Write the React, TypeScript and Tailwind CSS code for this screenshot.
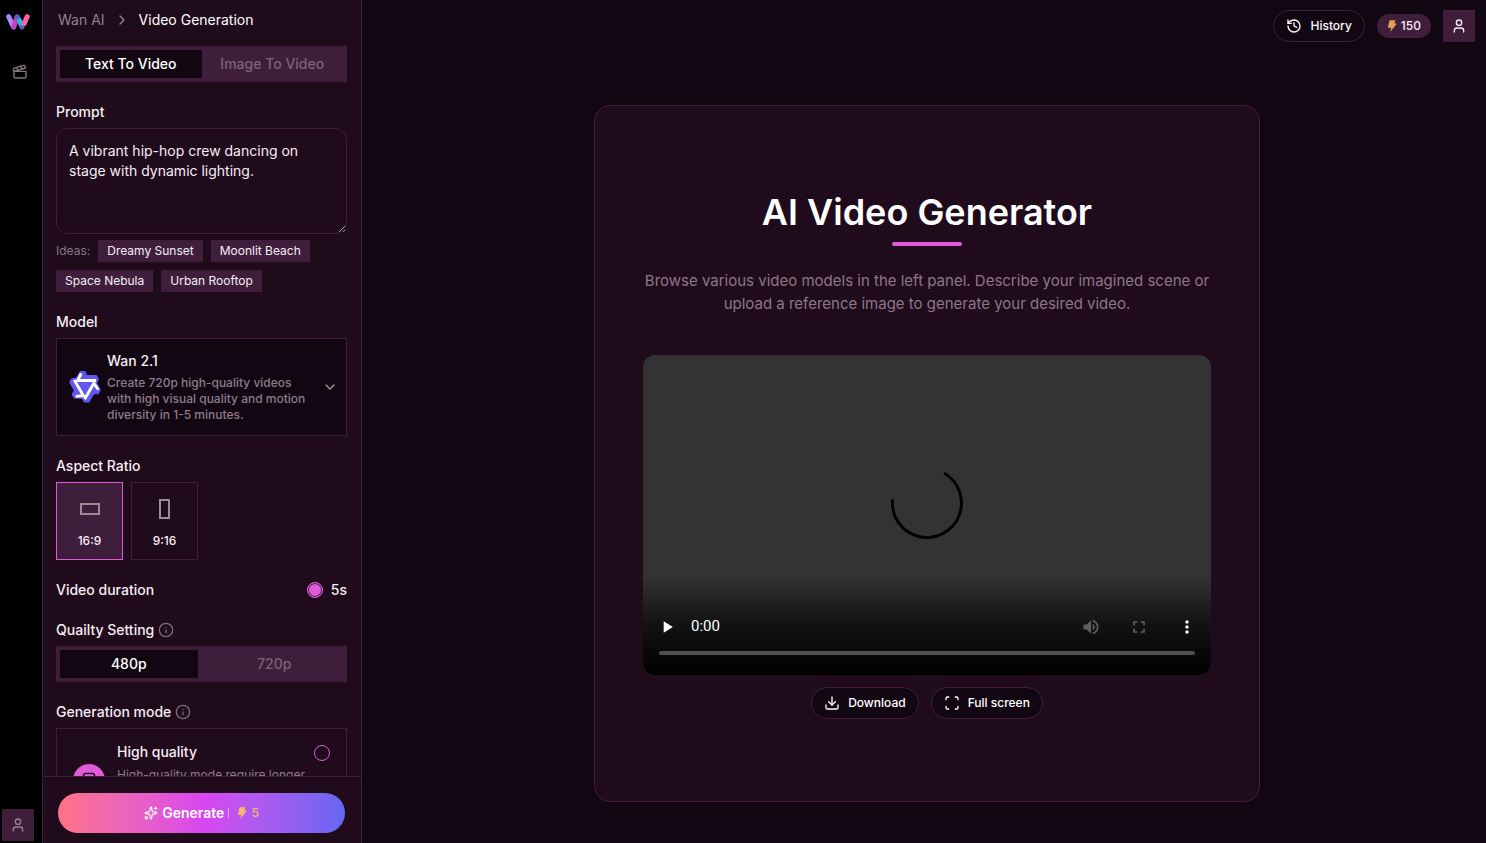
import { useState, type ReactNode } from "react";
import {
  ChevronDown,
  ChevronRight,
  Clapperboard,
  Download,
  History,
  Info,
  Scan,
  Sparkles,
  User,
} from "lucide-react";
import { MdFullscreen, MdMoreVert, MdPlayArrow, MdVolumeUp } from "react-icons/md";

const IDEAS = ["Dreamy Sunset", "Moonlit Beach", "Space Nebula", "Urban Rooftop"];

function WanLogo() {
  return (
    <svg viewBox="0 0 24 16" className="h-4 w-6" fill="none" strokeLinecap="round" strokeWidth="5">
      <path d="M2.7 2.7 7.5 13" stroke="#a78bfa" />
      <path d="M11 3 7.7 13" stroke="#c63fc0" />
      <path d="M11.4 2.9 16 13" stroke="#5b5fc7" />
      <path d="M13.4 6.8 14.6 9" stroke="#2fb8dc" />
      <path d="M21.2 2.7 18.2 9.500" stroke="#ff62b0" />
    </svg>
  );
}

function ModelLogo() {
  const arms = ["rotate(0 16 16)", "rotate(120 16 16)", "rotate(240 16 16)"];
  return (
    <svg viewBox="-0.5 0 33 33" className="size-8 shrink-0" fill="none">
      <path
        d="M11 0h5l2.300 4H28l2.500 4.500-2 4 3.900 7.200-2.500 4.300h-4.700l-4.800 8.400h-5.200l-2.400-3.700-8.200-.4L2.100 24l2.400-4-4.900-8.400 2.700-4.400 4.400-.3z"
        fill="#5f57ee"
      />
      {arms.map((t) => (
        <path key={t} d="M12 2.500 8.500 9.800h19" transform={t} stroke="#fff" strokeWidth="3" />
      ))}
    </svg>
  );
}

function Bolt({ className }: { className: string }) {
  return (
    <svg viewBox="0 0 12 14" className={className} fill="currentColor">
      <path d="M3 0h7L9 4h3L4 14l1-5H1z" />
    </svg>
  );
}

function Field({ label, info, children }: { label: string; info?: boolean; children: ReactNode }) {
  return (
    <section className="flex flex-col gap-1.5">
      <div className="flex items-center gap-1">
        <h2 className="text-sm font-medium">{label}</h2>
        {info && <Info className="size-4 text-[#7d6a79]" />}
      </div>
      {children}
    </section>
  );
}

function Segmented({
  options,
  value,
  onChange,
  className = "",
}: {
  options: string[];
  value: string;
  onChange: (v: string) => void;
  className?: string;
}) {
  return (
    <div className={`flex h-9 bg-[#3f1e3c] p-1 ${className}`}>
      {options.map((o) => (
        <button
          key={o}
          type="button"
          onClick={() => onChange(o)}
          className={`flex-1 text-sm font-medium ${
            o === value ? "bg-[#130613] text-white" : "text-[#7d6379]"
          }`}
        >
          {o}
        </button>
      ))}
    </div>
  );
}

function VideoPlayer() {
  return (
    <div className="flex aspect-[568/320] w-full flex-col overflow-hidden rounded-xl bg-[#333]">
      <div className="flex grow flex-col items-center justify-end pb-9">
        <svg viewBox="0 0 72 72" className="size-[72px]" fill="none">
          <path d="M53 6A34.500 34.500 0 1 1 1.600 32.500" stroke="#000" strokeWidth="3" />
        </svg>
      </div>
      <div className="flex h-[100px] flex-col justify-end bg-linear-to-b from-transparent via-black/65 to-black pb-5">
        <div className="flex h-12 items-center text-white">
          <button type="button" aria-label="Play" className="flex w-12 justify-center">
            <MdPlayArrow className="size-5" />
          </button>
          <span className="grow font-[Roboto,sans-serif] text-[15px]">0:00</span>
          <button type="button" aria-label="Mute" className="flex w-12 justify-center text-[#5f5f5f]">
            <MdVolumeUp className="size-5" />
          </button>
          <button type="button" aria-label="Full screen" className="flex w-12 justify-center text-[#5f5f5f]">
            <MdFullscreen className="size-5" />
          </button>
          <button type="button" aria-label="More" className="flex w-12 justify-center">
            <MdMoreVert className="size-5" />
          </button>
        </div>
        <div className="mx-4 h-1 rounded-full bg-[#4f4f4f]" />
      </div>
    </div>
  );
}

export default function App() {
  const [mode, setMode] = useState("Text To Video");
  const [quality, setQuality] = useState("480p");
  const [ratio, setRatio] = useState("16:9");
  const [prompt, setPrompt] = useState(
    "A vibrant hip-hop crew dancing on stage with dynamic lighting."
  );

  return (
    <div className="flex h-screen bg-[#130613] font-[Inter,sans-serif] text-[#f5eef4]">
      {/* Icon rail */}
      <nav className="flex w-[42px] shrink-0 flex-col items-center bg-black pt-3.5 pr-1.5 pb-0.5">
        <a href="#" aria-label="Home">
          <WanLogo />
        </a>
        <a href="#" aria-label="Videos" className="mt-[34px] ml-1 text-[#84767f]">
          <Clapperboard className="size-4" />
        </a>
        <button
          type="button"
          aria-label="Account"
          className="mt-auto flex size-8 items-center justify-center bg-[#3f1e3c] text-[#94808f]"
        >
          <User className="size-4" />
        </button>
      </nav>

      {/* Settings panel */}
      <aside className="flex w-80 shrink-0 flex-col border-x border-[#411e3c] bg-[#200b1c]">
        <div className="flex min-h-0 grow flex-col gap-5 overflow-hidden pt-2.5 pr-3.5 pl-[13px]">
          <div className="flex flex-col gap-4">
            <div className="flex items-center gap-[9px] px-0.5 text-sm">
              <a href="#" className="text-[#93818f]">
                Wan AI
              </a>
              <ChevronRight className="size-4 text-[#93818f]" />
              <span className="text-white">Video Generation</span>
            </div>
            <Segmented options={["Text To Video", "Image To Video"]} value={mode} onChange={setMode} />
          </div>

          <Field label="Prompt">
            <textarea
              aria-label="Prompt"
              value={prompt}
              onChange={(e) => setPrompt(e.target.value)}
              className="block h-[106px] w-full rounded-xl border border-[#411e3c] bg-transparent px-3 py-3 text-sm outline-none"
            />
            <div className="flex flex-wrap items-center gap-2">
              <span className="text-xs text-[#8a7686]">Ideas:</span>
              {IDEAS.map((idea) => (
                <button
                  key={idea}
                  type="button"
                  onClick={() => setPrompt(idea)}
                  className="h-[22px] bg-[#3f1e3c] px-[9px] text-xs"
                >
                  {idea}
                </button>
              ))}
            </div>
          </Field>

          <Field label="Model">
            <button
              type="button"
              className="flex items-center gap-1.5 border border-[#411e3c] bg-[#130613] py-3 pr-2 pl-3 text-left"
            >
              <ModelLogo />
              <span className="grow">
                <span className="mb-1 block text-sm font-medium">Wan 2.1</span>
                <span className="block text-xs leading-4 font-medium text-[#8d7c89]">
                  Create 720p high-quality videos with high visual quality and motion diversity in 1-5
                  minutes.
                </span>
              </span>
              <ChevronDown className="size-4 shrink-0 text-[#a8929f]" />
            </button>
          </Field>

          <Field label="Aspect Ratio">
            <div className="flex gap-2">
              {["16:9", "9:16"].map((r) => (
                <button
                  key={r}
                  type="button"
                  onClick={() => setRatio(r)}
                  className={`flex h-[78px] w-[67px] flex-col items-center gap-3 border pt-3.5 text-xs font-medium ${
                    r === ratio ? "border-[#e05ad9] bg-[#3f1e3c]" : "border-[#411e3c]"
                  }`}
                >
                  <span className="flex size-6 items-center justify-center">
                    <span
                      className={`border-2 border-[#9c8a98] ${
                        r === "16:9" ? "h-3 w-5" : "h-5 w-[11px]"
                      }`}
                    />
                  </span>
                  {r}
                </button>
              ))}
            </div>
          </Field>

          <div className="flex items-center justify-between text-sm font-medium">
            <h2>Video duration</h2>
            <label className="flex items-center gap-2">
              <input
                type="radio"
                name="duration"
                defaultChecked
                className="size-4 appearance-none rounded-full border border-[#e05ad9] bg-[#e05ad9] inset-ring inset-ring-[#3f1e3c]"
              />
              5s
            </label>
          </div>

          <Field label="Quailty Setting" info>
            <Segmented options={["480p", "720p"]} value={quality} onChange={setQuality} className="gap-2" />
          </Field>

          <Field label="Generation mode" info>
            <label className="flex h-[104px] items-start border border-[#411e3c] px-4 py-[13px]">
              <span className="mr-3 flex size-8 shrink-0 items-center justify-center self-center rounded-full bg-[#e05ad9]">
                <svg viewBox="0 0 16 16" className="size-4" fill="none" stroke="#200b1c" strokeWidth="1.500">
                  <rect x="2.500" y="1.500" width="11" height="13" rx="2" />
                  <path d="M5.500 5h5M5.500 8h5" />
                </svg>
              </span>
              <span className="grow">
                <span className="mb-[5px] block text-sm font-medium">High quality</span>
                <span className="block text-xs leading-4 text-[#8d7c89]">
                  High-quality mode require longer
                </span>
              </span>
              <input
                type="radio"
                name="generation-mode"
                className="mt-[3px] size-4 shrink-0 appearance-none rounded-full border border-[#e05ad9]"
              />
            </label>
          </Field>
        </div>

        <div className="border-t border-[#411e3c] pt-4 pr-4 pb-2.5 pl-[15px]">
          <button
            type="button"
            className="flex h-10 w-full items-center justify-center gap-1 rounded-full bg-linear-to-r from-[#ff7285] via-[#d946ef] to-[#6366f1] text-sm font-semibold text-white"
          >
            <Sparkles className="size-3.5" />
            Generate
            <span className="h-2.5 w-px bg-white/50" />
            <span className="ml-1 flex items-center gap-1 text-xs font-medium text-[#f5b96b]">
              <Bolt className="h-3 w-2.5" />5
            </span>
          </button>
        </div>
      </aside>

      {/* Workspace */}
      <main className="flex min-w-0 grow flex-col">
        <header className="flex items-center justify-end gap-3 pt-2.5 pr-[11px]">
          <button
            type="button"
            className="flex h-8 items-center gap-2 rounded-full border border-[#411e3c] px-3 text-xs font-medium text-white"
          >
            <History className="size-4" />
            History
          </button>
          <span className="flex h-6 items-center gap-1 rounded-full bg-[#3f1e3c] px-2.5 text-xs font-medium">
            <Bolt className="h-3 w-2.5 text-[#e0a34e]" />
            150
          </span>
          <button type="button" aria-label="Account" className="flex size-8 items-center justify-center bg-[#3f1e3c]">
            <User className="size-4" />
          </button>
        </header>

        <div className="flex grow justify-center pt-[63px] pb-[41px] pl-1.5">
          <div className="flex w-full max-w-[666px] flex-col items-center justify-center rounded-2xl border border-[#411e3c] bg-[#200b1c] px-12 pt-[3px]">
            <h1 className="text-4xl font-semibold text-white">AI Video Generator</h1>
            <div className="mt-2.5 h-1 w-[70px] rounded-full bg-[#e05ad9]" />
            <p className="mt-[23px] mb-10 text-center text-[15px] leading-[23px] text-[#8d7789]">
              Browse various video models in the left panel. Describe your imagined scene or upload a
              reference image to generate your desired video.
            </p>
            <VideoPlayer />
            <div className="mt-3 flex gap-3">
              <button
                type="button"
                className="flex h-8 items-center gap-2 rounded-full border border-[#411e3c] bg-[#130613] px-3 text-xs font-medium text-white"
              >
                <Download className="size-4" />
                Download
              </button>
              <button
                type="button"
                className="flex h-8 items-center gap-2 rounded-full border border-[#411e3c] bg-[#130613] px-3 text-xs font-medium text-white"
              >
                <Scan className="size-4" />
                Full screen
              </button>
            </div>
          </div>
        </div>
      </main>
    </div>
  );
}
